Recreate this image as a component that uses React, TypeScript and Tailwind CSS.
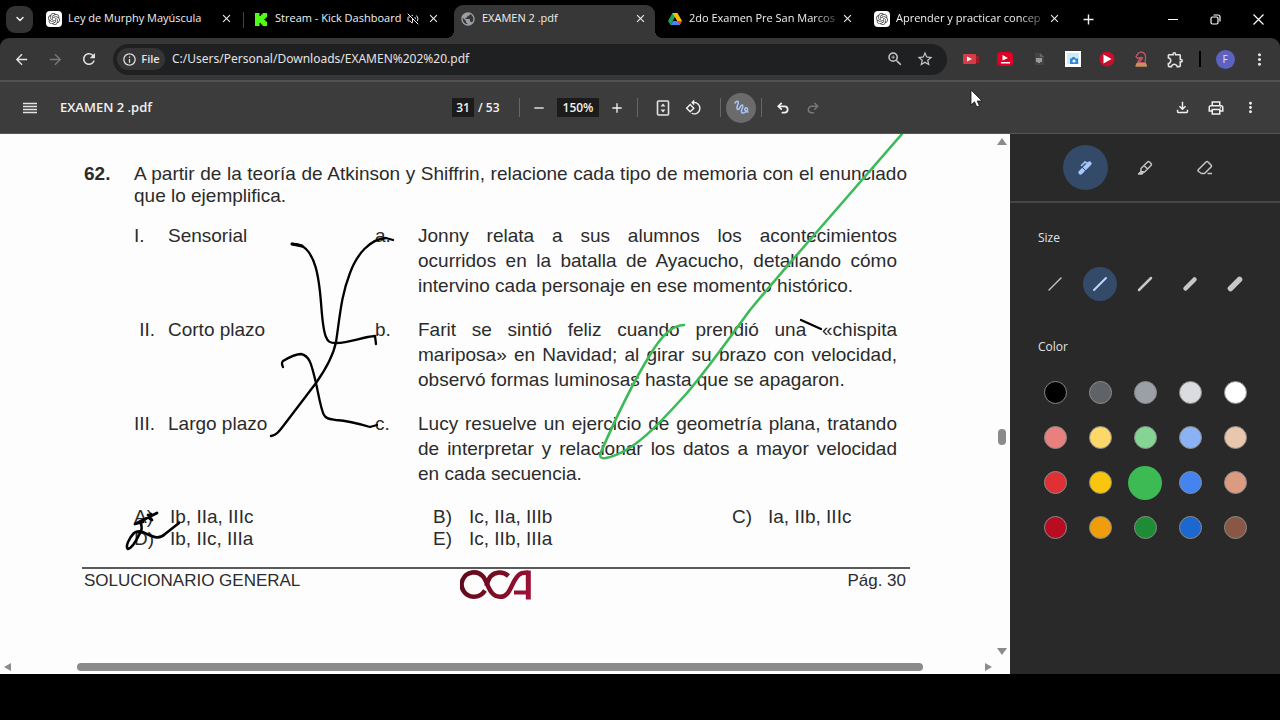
import React, { useState } from 'react';
import { ChevronDown, Undo2, Redo2, VolumeOff } from 'lucide-react';
import {
  MdAdd,
  MdArrowBack,
  MdArrowForward,
  MdClose,
  MdMoreVert,
  MdOutlineExtension,
  MdOutlineFileDownload,
  MdOutlineInfo,
  MdOutlinePrint,
  MdPublic,
  MdRefresh,
  MdRemove,
  MdRotate90DegreesCcw,
  MdStarBorder,
  MdZoomIn
} from 'react-icons/md';
import { SiOpenai } from 'react-icons/si';

const OpenAiFavicon = () => (
  <span className="flex h-4 w-4 items-center justify-center rounded bg-white text-[#444]">
    <SiOpenai size={12} />
  </span>
);

const KickFavicon = () => (
  <svg width="16" height="16" viewBox="0 0 16 16" fill="#53fc18">
    <path d="M2 2h4.500v3H8V3.500h1.500V2H14v4.500h-1.500V8H11v1h1.500v1.500H14V15H9.500v-1.500H8V12H6.500v3H2z" />
  </svg>
);

const DriveFavicon = () => (
  <svg width="16" height="16" viewBox="0 0 16 16">
    <path d="M5.500 2h5L8 6.200 3.600 14 1 10z" fill="#1ea362" />
    <path d="M5.500 2h5L15 10h-5z" fill="#fbbc05" />
    <path d="M3.600 14 6 10h9l-2.400 4z" fill="#4285f4" />
    <path d="M12.600 14 10.300 10H15z" fill="#ea4335" />
    <path d="M8 6.300 10 10H6z" fill="#000" />
  </svg>
);

const tabs = [
  { title: 'Ley de Murphy Mayúscula', icon: <OpenAiFavicon /> },
  { title: 'Stream - Kick Dashboard', icon: <KickFavicon />, muted: true },
  { title: 'EXAMEN 2 .pdf', icon: <MdPublic size={16} className="text-[#9aa0a6]" />, active: true },
  { title: '2do Examen Pre San Marcos', icon: <DriveFavicon />, fade: true },
  { title: 'Aprender y practicar concep', icon: <OpenAiFavicon />, fade: true }
];

const TabStrip = () => (
  <header className="flex h-[38px] items-stretch bg-black text-[#f0f0f0]">
    <div className="flex w-[37px] items-center pl-1.5">
      <button aria-label="Search tabs" className="flex h-[27px] w-[27px] items-center justify-center rounded-[9px] bg-[#333]">
        <ChevronDown size={12} strokeWidth={3} />
      </button>
    </div>
    {tabs.map((tab, i) => (
      <div key={tab.title} className="relative flex max-w-[207px] min-w-0 flex-1 px-[3px] pt-[5px]">
        {tab.active && (
          <>
            <span className="absolute bottom-0 -left-[5px] h-2 w-2 bg-[radial-gradient(circle_at_0_0,#000_8px,#373737_8px)]" />
            <span className="absolute -right-[5px] bottom-0 h-2 w-2 bg-[radial-gradient(circle_at_100%_0,#000_8px,#373737_8px)]" />
          </>
        )}
        <div
          className={`flex min-w-0 flex-1 items-center rounded-t-[9px] pr-[7px] pb-1.5 pl-1.5 ${tab.active ? 'bg-[#373737]' : ''}`}
        >
          <button className="flex min-w-0 flex-1 items-center gap-1.5 text-left text-[11px]">
            <span className="flex-shrink-0">{tab.icon}</span>
            <span
              className={`whitespace-nowrap ${tab.fade ? '[mask-image:linear-gradient(to_right,#000_85%,rgba(0,0,0,0.3))]' : ''}`}
            >
              {tab.title}
            </span>
            {tab.muted && <VolumeOff size={12} className="flex-shrink-0" />}
          </button>
          <button aria-label="Close tab" className="ml-1 flex h-4 w-4 flex-shrink-0 items-center justify-center">
            <MdClose size={13} />
          </button>
        </div>
        {i === 0 && <span className="absolute top-3 right-0 h-4 w-px bg-[#444]" />}
      </div>
    ))}
    <button aria-label="New tab" className="flex w-8 items-center justify-center">
      <MdAdd size={17} />
    </button>
    <div className="ml-auto flex">
      <button aria-label="Minimize" className="flex w-[43px] items-center justify-center">
        <span className="h-px w-2.5 bg-white" />
      </button>
      <button aria-label="Restore" className="flex w-[43px] items-center justify-center">
        <svg width="11" height="11" viewBox="0 0 11 11" fill="none" stroke="#fff" strokeWidth="1.200">
          <rect x="1" y="3" width="7" height="7" rx="1.500" />
          <path d="M3.500 1h4.500a2 2 0 0 1 2 2v4.500" />
        </svg>
      </button>
      <button aria-label="Close" className="flex w-[43px] items-center justify-center">
        <svg width="11" height="11" viewBox="0 0 11 11" stroke="#fff" strokeWidth="1.200">
          <path d="m.5.500 10 10M10.500.500l-10 10" />
        </svg>
      </button>
    </div>
  </header>
);

const extensions = [
  {
    name: 'Screen recorder',
    icon: (
      <svg width="16" height="16" viewBox="0 0 16 16">
        <path d="M11 5h5v7h-5z" fill="#9d1c25" />
        <rect x="0" y="3" width="13" height="10" rx="1" fill="#d93a48" />
        <path d="M4 5.500v5L9 8z" fill="#fff" />
      </svg>
    )
  },
  {
    name: 'Video downloader',
    icon: (
      <svg width="16" height="16" viewBox="0 0 16 16">
        <rect y="1" width="16" height="14" rx="4" fill="#e00025" />
        <path d="M5.500 4v5.500L11 7zM4 11h9v1.500H4z" fill="#fff" />
      </svg>
    )
  },
  {
    name: 'Document helper',
    icon: (
      <svg width="16" height="16" viewBox="0 0 16 16">
        <path d="M4 2h5l4 4v8H4z" fill="#454545" />
        <path d="M9 2v4h4z" fill="#666" />
        <path d="M5 7h6v4H9v1H7v-1H5z" fill="#9a9a9a" />
      </svg>
    )
  },
  {
    name: 'Screenshot',
    icon: (
      <svg width="16" height="16" viewBox="0 0 16 16">
        <path d="M0 0h16v16H0z" fill="#fff" />
        <path d="M2 2h12v11H2z" fill="#c9ecf5" />
        <path d="M5 7.500h1.500l1-1.500h2l1 1.500H13V13H5z" fill="#2d86e0" />
        <circle cx="9" cy="10" r="1.600" fill="#fff" />
      </svg>
    )
  },
  {
    name: 'Player',
    icon: (
      <svg width="16" height="16" viewBox="0 0 16 16">
        <circle cx="8" cy="8" r="7.500" fill="#c8102e" />
        <path d="M4.500 3.500v9L12.500 8z" fill="#fff" />
      </svg>
    )
  },
  {
    name: 'Chess',
    icon: (
      <svg width="16" height="16" viewBox="0 0 16 16" fill="none" strokeWidth="1.300" strokeLinejoin="round">
        <path d="M4 7 3 5.500 5.500 2 8 1c4 0 5 4 4.500 7L12 12H5l.500-2.500L8.500 6.500 6 7z" stroke="#c4566a" />
        <path d="M6 11.500 10 6.500" stroke="#c4566a" />
        <path d="M4 12.500h8.500l1 2.500H3z" fill="#c98f62" stroke="#c98f62" />
      </svg>
    )
  },
  { name: 'Extensions', icon: <MdOutlineExtension size={19} /> }
];

const AddressBar = () => (
  <div className="bg-black">
    <div className="flex h-[44px] items-center rounded-t-[9px] border-b-2 border-[#525252] bg-[#373737] px-1 text-[#e3e3e3]">
      <button aria-label="Back" className="flex w-[34px] justify-center">
        <MdArrowBack size={17} />
      </button>
      <button aria-label="Forward" className="flex w-[34px] justify-center text-[#777]">
        <MdArrowForward size={17} />
      </button>
      <button aria-label="Reload" className="flex w-[34px] justify-center">
        <MdRefresh size={18} />
      </button>
      <div className="mx-[7px] flex h-[31px] flex-1 items-center rounded-full bg-[#1f2021] px-1">
        <button className="flex h-[22px] w-12 items-center justify-center gap-1 rounded-full bg-[#353535] text-[11px] font-semibold">
          <MdOutlineInfo size={15} />
          File
        </button>
        <input
          aria-label="Address"
          defaultValue="C:/Users/Personal/Downloads/EXAMEN%202%20.pdf"
          className="ml-[7px] min-w-0 flex-1 bg-transparent font-['Noto_Sans',sans-serif] text-[12px] outline-none"
        />
        <button aria-label="Zoom" className="flex w-[30px] justify-center text-[#c7c7c7]">
          <MdZoomIn size={18} />
        </button>
        <button aria-label="Bookmark" className="mr-[3px] flex w-[30px] justify-center text-[#c7c7c7]">
          <MdStarBorder size={18} />
        </button>
      </div>
      {extensions.map((ext) => (
        <button key={ext.name} aria-label={ext.name} className="flex w-[34px] justify-center">
          {ext.icon}
        </button>
      ))}
      <span className="mx-[7px] h-4 w-0.5 bg-black" />
      <button aria-label="Profile" className="flex w-[34px] justify-center">
        <span className="flex h-[19px] w-[19px] items-center justify-center rounded-full bg-[#5c62c0] text-[10px]">F</span>
      </button>
      <button aria-label="Menu" className="flex w-[34px] justify-center">
        <MdMoreVert size={19} />
      </button>
    </div>
  </div>
);

const Separator = ({ className }: { className: string }) => <span className={`h-[19px] w-px bg-[#666] ${className}`} />;

const PdfToolbar = () => (
  <div className="grid h-[52px] grid-cols-[1fr_auto_1fr] items-center border-b border-[#555] bg-[#3c3c3c] text-[13px] font-semibold text-[#f1f1f1]">
    <div className="flex items-center pl-[15px]">
      <button aria-label="Sidebar" className="flex w-[30px] justify-center">
        <svg width="14" height="12" viewBox="0 0 14 12" stroke="#e3e3e3" strokeWidth="1.300">
          <path d="M0 1.500h14M0 4.500h14M0 7.500h14M0 10.500h14" />
        </svg>
      </button>
      <span className="ml-[15px]">EXAMEN 2 .pdf</span>
    </div>
    <div className="flex items-center text-[12px]">
      <input aria-label="Page" defaultValue="31" className="h-[19px] w-[22px] bg-[#1b1b1b] text-center outline-none" />
      <span className="ml-1 w-[27px] whitespace-nowrap">/ 53</span>
      <Separator className="ml-3.5" />
      <button aria-label="Zoom out" className="ml-1 flex w-[30px] justify-center">
        <MdRemove size={16} />
      </button>
      <input
        aria-label="Zoom level"
        defaultValue="150%"
        className="mx-[3px] h-[19px] w-[42px] bg-[#1b1b1b] text-center outline-none"
      />
      <button aria-label="Zoom in" className="flex w-[30px] justify-center">
        <MdAdd size={16} />
      </button>
      <Separator className="ml-[5px]" />
      <button aria-label="Fit to page" className="ml-2.5 flex w-[30px] justify-center">
        <svg width="14" height="16" viewBox="0 0 14 16" fill="#e3e3e3">
          <rect x="1.500" y="1" width="11" height="14" rx="1" fill="none" stroke="#e3e3e3" strokeWidth="1.600" />
          <path d="M7 3.500 9.500 6.500h-5zM7 12.500 4.500 9.500h5z" />
        </svg>
      </button>
      <button aria-label="Rotate" className="flex w-[30px] justify-center">
        <MdRotate90DegreesCcw size={17} />
      </button>
      <Separator className="ml-3" />
      <button aria-label="Draw" className="mx-[5px] flex h-[30px] w-[30px] items-center justify-center rounded-full bg-[#6b6b6b]">
        <svg width="15" height="15" viewBox="0 0 15 15" fill="none" stroke="#a8c7fa" strokeWidth="1.500" strokeLinecap="round">
          <path d="M1 3C3 0 5 1 4 4 3 7 2 9 4 9.500 6 10 6 4 8.500 5 10 6 7 10 7.500 12 8 14 12 13 13.500 10 14 8 12 7 11 8.500 10 10 12 12 14 12" />
        </svg>
      </button>
      <Separator className="mr-1.5" />
      <button aria-label="Undo" className="flex w-[30px] justify-center">
        <Undo2 size={14} strokeWidth={3} />
      </button>
      <button aria-label="Redo" className="flex w-[30px] justify-center text-[#777]">
        <Redo2 size={14} strokeWidth={2.6} />
      </button>
    </div>
    <div className="flex justify-end pr-[13px]">
      <button aria-label="Download" className="flex w-[34px] justify-center">
        <MdOutlineFileDownload size={17} />
      </button>
      <button aria-label="Print" className="flex w-[34px] justify-center">
        <MdOutlinePrint size={18} />
      </button>
      <button aria-label="More actions" className="flex w-[34px] justify-center">
        <MdMoreVert size={17} />
      </button>
    </div>
  </div>
);

const statements = [
  {
    numeral: 'I.',
    type: 'Sensorial',
    letter: 'a.',
    lines: [
      'Jonny relata a sus alumnos los acontecimientos',
      'ocurridos en la batalla de Ayacucho, detallando cómo',
      'intervino cada personaje en ese momento histórico.'
    ]
  },
  {
    numeral: ' II.',
    type: 'Corto plazo',
    letter: 'b.',
    lines: [
      'Farit se sintió feliz cuando prendió una «chispita',
      'mariposa» en Navidad; al girar su brazo con velocidad,',
      'observó formas luminosas hasta que se apagaron.'
    ]
  },
  {
    numeral: 'III.',
    type: 'Largo plazo',
    letter: 'c.',
    lines: [
      'Lucy resuelve un ejercicio de geometría plana, tratando',
      'de interpretar y relacionar los datos a mayor velocidad',
      'en cada secuencia.'
    ]
  }
];

const answers = [
  ['A)', 'Ib, IIa, IIIc'],
  ['B)', 'Ic, IIa, IIIb'],
  ['C)', 'Ia, IIb, IIIc'],
  ['D)', 'Ib, IIc, IIIa'],
  ['E)', 'Ic, IIb, IIIa']
];

const OcaLogo = () => (
  <svg width="71" height="30" viewBox="0 0 71 30" fill="none" stroke="url(#oca)" strokeWidth="4.500">
    <defs>
      <linearGradient id="oca" x1="0" y1="0" x2="71" y2="30" gradientUnits="userSpaceOnUse">
        <stop offset="0" stopColor="#5c0a1a" />
        <stop offset="0.500" stopColor="#7a0c24" />
        <stop offset="1" stopColor="#a3123a" />
      </linearGradient>
    </defs>
    <path d="M25 20.500C22 25 18 26.800 14 26.800A12.200 12.200 0 1 1 23 6.500C28 12 29 26.800 40 26.800c9 0 10.500-10 15-17C58 5 60 2.800 65 2.800h3.500" />
    <path d="M68.300 .600V29.500" strokeWidth="5" />
    <path d="M48.500 6C43 1 35 1.500 30.500 6.500 28.500 9 27.500 12 26.500 16" />
    <path d="M54 22.500h15" strokeWidth="4" />
  </svg>
);

// Freehand ink placed on top of the page
const InkLayer = () => (
  <svg
    className="pointer-events-none absolute top-0 left-0"
    width="1000"
    height="520"
    viewBox="0 134 1000 520"
    fill="none"
    stroke="#000"
    strokeWidth="2.300"
    strokeLinecap="round"
    strokeLinejoin="round"
  >
    <path d="M292 244C299 244 303 246 306 249 315 258 318 274 320 292 322 310 322 328 326 337 328 342 330 343 336 343 350 343 362 337 375 336L376 344" />
    <path d="M292 244 302 246" strokeWidth="3" />
    <path d="M271 436C276 435 278 433 284 425L316 383C328 366 334 352 336 342 340 316 341 296 350 273 357 254 370 239 386 238L393 240" />
    <path d="M283 367C282 365 281 363 283 361 288 358 296 354 301 354 311 356 312 368 316 383 319 397 321 410 324 415 326 419 330 419 336 420 350 421 360 424 370 427L377 425" />
    <path d="M801 320 821 329" />
    <path d="M157 513 135 524 143 522M148 515 152 520M151 514 150 519" strokeWidth="2.800" />
    <path
      d="M141 524C142 527 142 530 140 533 137 539 133 548 128 549 125 547 129 538 134 533 138 530 142 531 147 534 155 538 160 539 165 534L179 523"
      strokeWidth="2.600"
    />
    <path
      d="M684 325C672 325 660 338 650 355 630 387 615 420 601 452 599 457 601 459 606 458 633 453 660 423 687 393 710 366 730 337 750 310 770 286 795 257 815 234L902 134"
      stroke="#3dba58"
      strokeWidth="2.600"
    />
  </svg>
);

const PdfPage = () => (
  <div className="relative flex-1 overflow-hidden pl-[84px] font-['Liberation_Sans',Arial,sans-serif] text-[19px] text-[#2b2b2b]">
    <div className="flex w-[823px] pt-[29px] leading-[22px]">
      <span className="w-[50px] font-bold">62.</span>
      <p className="flex-1">
        <span className="block whitespace-nowrap [text-align-last:justify]">
          A partir de la teoría de Atkinson y Shiffrin, relacione cada tipo de memoria con el enunciado
        </span>
        que lo ejemplifica.
      </p>
    </div>
    <div className="mt-4 ml-[50px] flex w-[763px] flex-col gap-[19px] leading-[25px]">
      {statements.map((s) => (
        <div key={s.letter} className="flex">
          <span className="w-[34px] whitespace-pre">{s.numeral}</span>
          <span className="w-[207px]">{s.type}</span>
          <span className="w-[43px]">{s.letter}</span>
          <p className="flex-1">
            {s.lines.map((line, i) => (
              <span key={line} className={i < 2 ? 'block whitespace-nowrap [text-align-last:justify]' : 'block whitespace-nowrap'}>
                {line}
              </span>
            ))}
          </p>
        </div>
      ))}
    </div>
    <div className="mt-5 ml-[50px] grid w-[897px] grid-cols-3 leading-[22px]">
      {answers.map(([letter, text]) => (
        <div key={letter} className="flex">
          <span className="w-9">{letter}</span>
          <span>{text}</span>
        </div>
      ))}
    </div>
    <div className="mt-[17px] -ml-0.5 grid w-[828px] grid-cols-[1fr_auto_1fr] border-t-2 border-[#5a5a5a] pt-px pr-1 pl-0.5 text-[17px] leading-[22px]">
      <span>SOLUCIONARIO GENERAL</span>
      <OcaLogo />
      <span className="text-right">Pág. 30</span>
    </div>
    <InkLayer />
  </div>
);

const Viewer = () => (
  <main className="flex min-w-0 flex-1 flex-col bg-[#fdfdfd]">
    <div className="flex min-h-0 flex-1">
      <PdfPage />
      <div className="flex w-4 flex-col items-center py-1">
        <span className="border-x-[5px] border-b-[7px] border-x-transparent border-b-[#8b8b8b]" />
        <span className="mt-[284px] h-4 w-2 rounded-full bg-[#8b8b8b]" />
        <span className="mt-auto border-x-[5px] border-t-[7px] border-x-transparent border-t-[#8b8b8b]" />
      </div>
    </div>
    <div className="flex h-[15px] items-center pr-[18px] pl-1">
      <span className="border-y-[4px] border-r-[7px] border-y-transparent border-r-[#8b8b8b]" />
      <span className="mr-[62px] ml-[66px] h-2 flex-1 rounded-full bg-[#8b8b8b]" />
      <span className="border-y-[4px] border-l-[7px] border-y-transparent border-l-[#8b8b8b]" />
    </div>
  </main>
);

const tools = [
  {
    name: 'Pen',
    icon: (
      <svg width="16" height="16" viewBox="0 0 16 16" fill="none" stroke="#a8c7fa" strokeLinecap="round">
        <path d="M3.500 12.500 6 10" strokeWidth="4.200" />
        <path d="M8 8 12.500 3.500" strokeWidth="4.200" />
        <path d="m4.500 5.500 3.500-3.500 2 1" strokeWidth="1.600" />
        <path d="m5.500 7.500 3 3" stroke="#334a68" strokeWidth="1" />
      </svg>
    )
  },
  {
    name: 'Highlighter',
    icon: (
      <svg width="16" height="16" viewBox="0 0 16 16" fill="none" stroke="#c7c7c7" strokeWidth="1.400" strokeLinejoin="round">
        <path d="M4 8.500 10.500 2q1-1 2 0l1.500 1.500q1 1 0 2L7.500 12H5l-1-1zM7 5.500 10.500 9" />
        <path d="M4 11.500 1.500 14H5l1.500-2z" fill="#c7c7c7" />
      </svg>
    )
  },
  {
    name: 'Eraser',
    icon: (
      <svg width="16" height="16" viewBox="0 0 16 16" fill="none" stroke="#c7c7c7" strokeWidth="1.500" strokeLinejoin="round">
        <path d="M1.500 9.500 9 2q1-1 2 0l3 3q1 1 0 2l-6.500 6.500h-3L1.500 11.500q-1-1 0-2zM10.500 13.500H15" />
      </svg>
    )
  }
];

const sizes = [1.4, 2, 2.5, 4.5, 5.5];

const colors = [
  { name: 'Black', bg: 'bg-black' },
  { name: 'Dark grey', bg: 'bg-[#5f6368]' },
  { name: 'Grey', bg: 'bg-[#9aa0a6]' },
  { name: 'Light grey', bg: 'bg-[#dadce0]' },
  { name: 'White', bg: 'bg-white' },
  { name: 'Light red', bg: 'bg-[#e88080]' },
  { name: 'Light yellow', bg: 'bg-[#fdd868]' },
  { name: 'Light green', bg: 'bg-[#84d494]' },
  { name: 'Light blue', bg: 'bg-[#8ab2f5]' },
  { name: 'Light tan', bg: 'bg-[#e9c6ae]' },
  { name: 'Red', bg: 'bg-[#e03035]' },
  { name: 'Yellow', bg: 'bg-[#fac60d]' },
  { name: 'Green', bg: 'bg-[#3dba54]' },
  { name: 'Blue', bg: 'bg-[#4584f0]' },
  { name: 'Tan', bg: 'bg-[#dc9a80]' },
  { name: 'Dark red', bg: 'bg-[#b80d20]' },
  { name: 'Orange', bg: 'bg-[#ef9d0a]' },
  { name: 'Dark green', bg: 'bg-[#1d8c34]' },
  { name: 'Dark blue', bg: 'bg-[#1d68d0]' },
  { name: 'Brown', bg: 'bg-[#885745]' }
];

const AnnotationPanel = () => {
  const [size, setSize] = useState(2);
  const [color, setColor] = useState('Green');

  return (
    <aside className="w-[270px] flex-shrink-0 bg-[#29292a] text-[12px] font-medium text-[#e3e3e3]">
      <div className="flex h-[69px] items-center justify-center gap-[15px] border-b-2 border-[#454545]">
        {tools.map((tool) => (
          <button
            key={tool.name}
            aria-label={tool.name}
            className={`flex h-[45px] w-[45px] items-center justify-center rounded-full ${tool.name === 'Pen' ? 'bg-[#334a68]' : ''}`}
          >
            {tool.icon}
          </button>
        ))}
      </div>

      <h2 className="mt-[26px] ml-7 leading-[18px]">Size</h2>
      <div className="mt-3.5 flex justify-center">
        {sizes.map((s) => (
          <label key={s} className="flex h-[45px] w-[45px] items-center justify-center">
            <input
              type="radio"
              name="size"
              aria-label={`Size ${s}`}
              checked={size === s}
              onChange={() => setSize(s)}
              className="peer sr-only"
            />
            <span className="flex h-[34px] w-[34px] items-center justify-center rounded-full peer-checked:bg-[#334a68]">
              <svg width="16" height="16" viewBox="0 0 16 16" stroke={size === s ? '#c3d7fb' : '#c7c7c7'} strokeLinecap="round">
                <path d={s > 3 ? 'M3.500 12.500 12.500 3.500' : 'M2 14 14 2'} strokeWidth={s} />
              </svg>
            </span>
          </label>
        ))}
      </div>

      <h2 className="mt-8 ml-7 leading-[18px]">Color</h2>
      <div className="mt-3.5 grid grid-cols-[repeat(5,45px)] justify-center">
        {colors.map((c) => (
          <label key={c.name} className="flex h-[45px] w-[45px] items-center justify-center">
            <input
              type="radio"
              name="color"
              aria-label={c.name}
              checked={color === c.name}
              onChange={() => setColor(c.name)}
              className={`h-[23px] w-[23px] appearance-none rounded-full border border-[#8a8a8a] checked:h-[34px] checked:w-[34px] checked:border-0 ${c.bg}`}
            />
          </label>
        ))}
      </div>
    </aside>
  );
};

export default function App() {
  return (
    <div className="relative flex min-h-screen flex-col bg-black pb-[46px] font-['Open_Sans',sans-serif]">
      <TabStrip />
      <AddressBar />
      <PdfToolbar />
      <div className="flex flex-1">
        <Viewer />
        <AnnotationPanel />
      </div>
      {/* Mouse pointer */}
      <svg className="absolute top-[89px] left-[970px]" width="13" height="19" viewBox="0 0 13 19">
        <path d="M1 1v15l3.500-3.200 2.300 5.200 2.600-1.200L7.200 12H12z" fill="#fff" stroke="#111" strokeWidth="0.800" />
      </svg>
    </div>
  );
}
